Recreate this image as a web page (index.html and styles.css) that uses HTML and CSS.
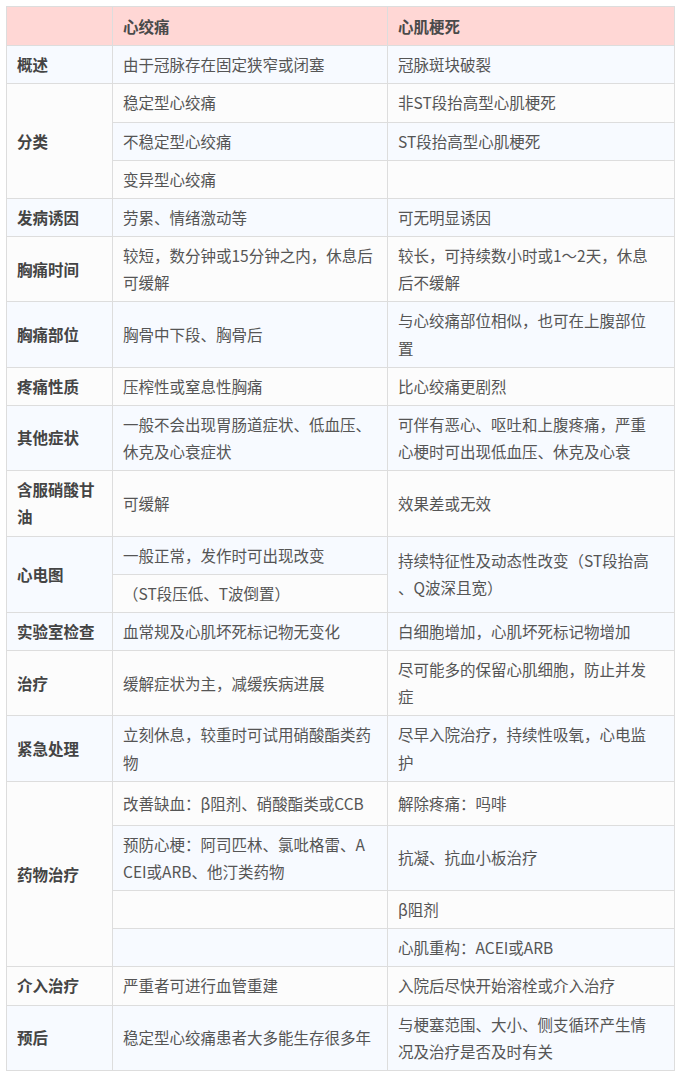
FILE: index.html
```html
<!DOCTYPE html>
<html lang="zh-CN">
<head>
<meta charset="utf-8">
<title>心绞痛与心肌梗死</title>
<link rel="stylesheet" href="styles.css">
</head>
<body>
<div class="wrap">
<table class="cmp">
  <colgroup>
    <col class="c1"><col class="c2"><col class="c3">
  </colgroup>
  <thead>
    <tr><th></th><th>心绞痛</th><th>心肌梗死</th></tr>
  </thead>
  <tbody>
    <tr><td class="k">概述</td><td>由于冠脉存在固定狭窄或闭塞</td><td>冠脉斑块破裂</td></tr>
    <tr><td class="k" rowspan="3">分类</td><td>稳定型心绞痛</td><td>非ST段抬高型心肌梗死</td></tr>
    <tr><td>不稳定型心绞痛</td><td>ST段抬高型心肌梗死</td></tr>
    <tr><td>变异型心绞痛</td><td></td></tr>
    <tr><td class="k">发病诱因</td><td>劳累、情绪激动等</td><td>可无明显诱因</td></tr>
    <tr><td class="k">胸痛时间</td><td>较短，数分钟或15分钟之内，休息后<br>可缓解</td><td>较长，可持续数小时或1～2天，休息<br>后不缓解</td></tr>
    <tr><td class="k">胸痛部位</td><td>胸骨中下段、胸骨后</td><td>与心绞痛部位相似，也可在上腹部位<br>置</td></tr>
    <tr><td class="k">疼痛性质</td><td>压榨性或窒息性胸痛</td><td>比心绞痛更剧烈</td></tr>
    <tr><td class="k">其他症状</td><td>一般不会出现胃肠道症状、低血压、<br>休克及心衰症状</td><td>可伴有恶心、呕吐和上腹疼痛，严重<br>心梗时可出现低血压、休克及心衰</td></tr>
    <tr><td class="k">含服硝酸甘<br>油</td><td>可缓解</td><td>效果差或无效</td></tr>
    <tr><td class="k" rowspan="2">心电图</td><td>一般正常，发作时可出现改变</td><td rowspan="2">持续特征性及动态性改变（ST段抬高<br>、Q波深且宽）</td></tr>
    <tr><td>（ST段压低、T波倒置）</td></tr>
    <tr><td class="k">实验室检查</td><td>血常规及心肌坏死标记物无变化</td><td>白细胞增加，心肌坏死标记物增加</td></tr>
    <tr><td class="k">治疗</td><td>缓解症状为主，减缓疾病进展</td><td>尽可能多的保留心肌细胞，防止并发<br>症</td></tr>
    <tr><td class="k">紧急处理</td><td>立刻休息，较重时可试用硝酸酯类药<br>物</td><td>尽早入院治疗，持续性吸氧，心电监<br>护</td></tr>
    <tr class="tall"><td class="k" rowspan="4">药物治疗</td><td>改善缺血：β阻剂、硝酸酯类或CCB</td><td>解除疼痛：吗啡</td></tr>
    <tr><td>预防心梗：阿司匹林、氯吡格雷、A<br>CEI或ARB、他汀类药物</td><td>抗凝、抗血小板治疗</td></tr>
    <tr><td></td><td>β阻剂</td></tr>
    <tr><td></td><td>心肌重构：ACEI或ARB</td></tr>
    <tr><td class="k">介入治疗</td><td>严重者可进行血管重建</td><td>入院后尽快开始溶栓或介入治疗</td></tr>
    <tr><td class="k">预后</td><td>稳定型心绞痛患者大多能生存很多年</td><td>与梗塞范围、大小、侧支循环产生情<br>况及治疗是否及时有关</td></tr>
  </tbody>
</table>
</div>
</body>
</html>
```

FILE: styles.css
```css
html, body {
  margin: 0;
  padding: 0;
  background: #ffffff;
}
.wrap {
  padding: 6px;
}
.cmp {
  border-collapse: collapse;
  table-layout: fixed;
  width: 668px;
  font-family: "Noto Sans CJK SC", "Microsoft YaHei", sans-serif;
  font-size: 15.5px;
  line-height: 27.17px;
  color: #555555;
}
.c1 { width: 106px; }
.c2 { width: 275px; }
.c3 { width: 287px; }
.cmp th,
.cmp td {
  border: 1px solid #dddddd;
  padding: 5px 10px;
  text-align: left;
  vertical-align: middle;
  white-space: nowrap;
  overflow: hidden;
}
.cmp th {
  background: #ffd7d5;
  font-weight: bold;
  color: #4a4a4a;
  padding-top: 6px;
}
.cmp tbody tr:nth-child(odd) td {
  background: #f7faff;
}
.cmp tbody tr:nth-child(even) td {
  background: #fcfcfc;
}
.cmp td.k {
  font-weight: bold;
  color: #444444;
}
.cmp tr.tall td {
  height: 33px;
}
```
